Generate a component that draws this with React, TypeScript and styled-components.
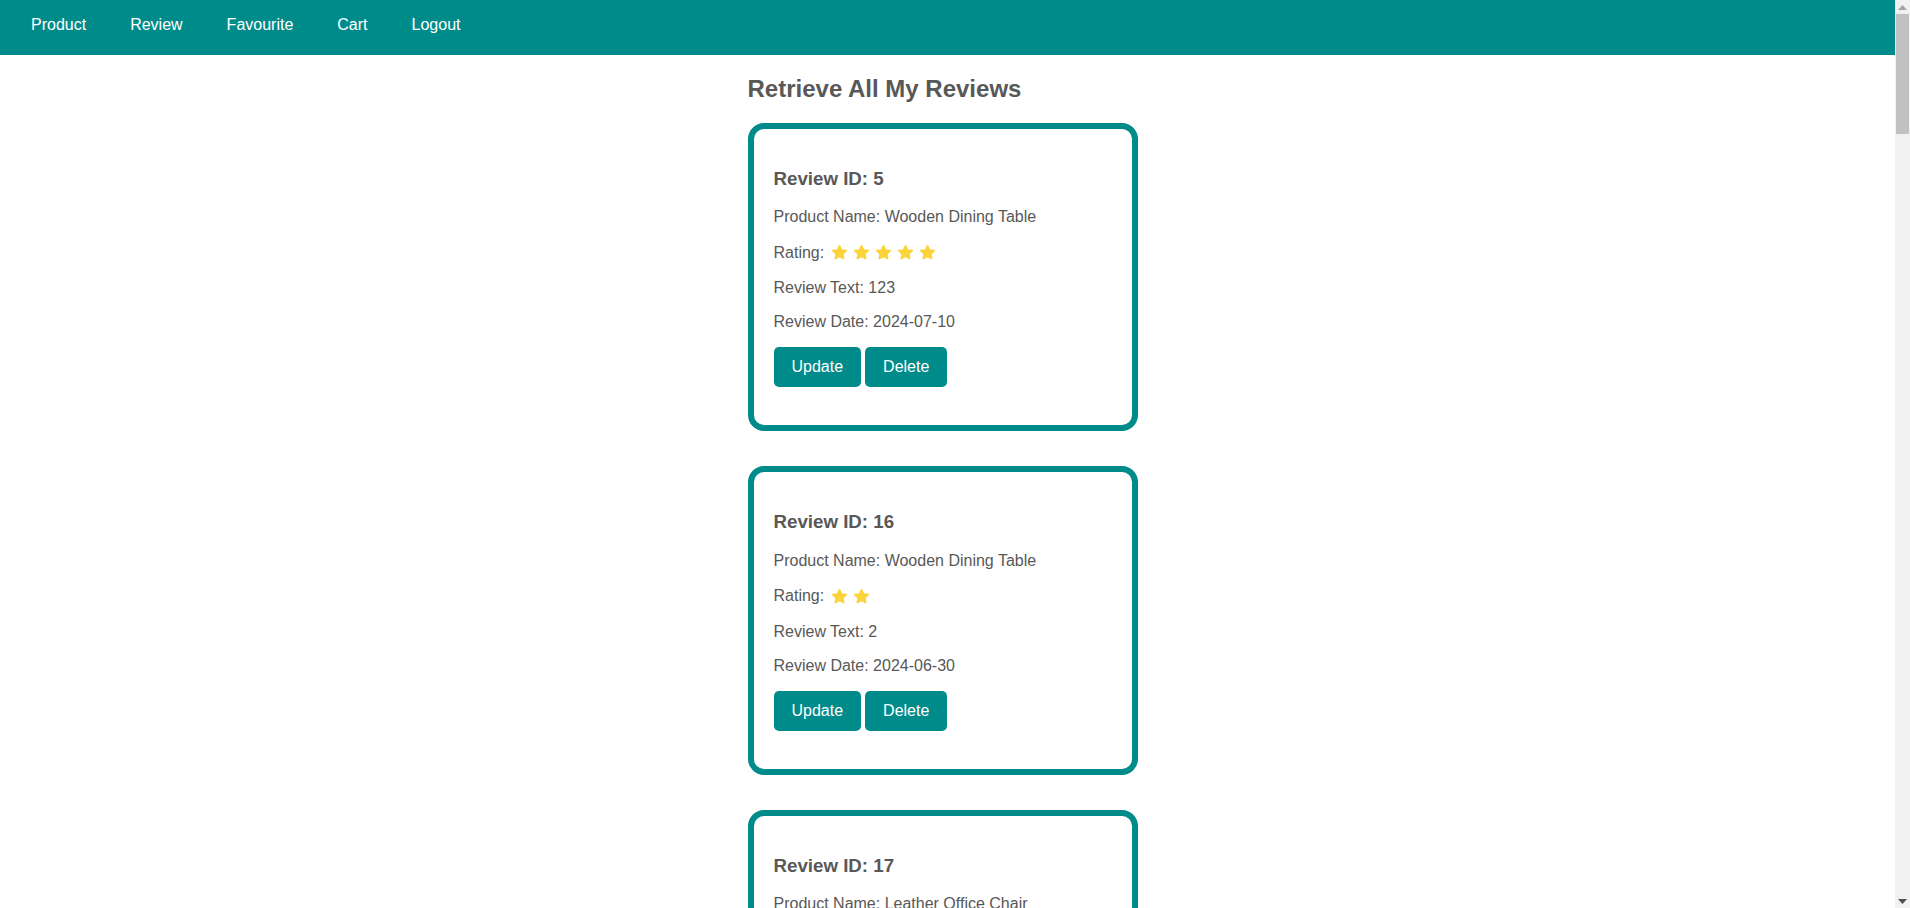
import React from "react";
import styled, { createGlobalStyle } from "styled-components";

const GlobalStyle = createGlobalStyle`
  html, body {
    margin: 0;
    padding: 0;
    background: #ffffff;
    font-family: "Liberation Sans", Arial, sans-serif;
    color: #585858;
  }
`;

const Page = styled.div`
  margin-right: 15px;
`;

const NavBar = styled.nav`
  display: flex;
  align-items: flex-start;
  height: 55px;
  padding: 0 9px;
  background: #008b8b;
  box-sizing: border-box;
`;

const NavLink = styled.a`
  display: block;
  padding: 16px 22px 0;
  color: #ffffff;
  font-size: 16px;
  line-height: 18px;
  text-decoration: none;
  cursor: pointer;
`;

const Main = styled.main`
  width: 400px;
  margin: 0 auto;
  padding-bottom: 40px;
`;

const Title = styled.h2`
  margin: 20px 0;
  font-size: 24px;
  font-weight: bold;
  color: #585858;
`;

const Card = styled.section`
  width: 390px;
  box-sizing: border-box;
  border: 6px solid #008b8b;
  border-radius: 16px;
  padding: 20px;
  margin-bottom: 35px;
`;

const CardTitle = styled.h3`
  margin: 18.72px 0;
  font-size: 18.72px;
  font-weight: bold;
  color: #585858;
`;

const Field = styled.p`
  margin: 16px 0;
  font-size: 16px;
  color: #585858;
  display: flex;
  align-items: center;
`;

const Stars = styled.span`
  display: inline-flex;
  gap: 5px;
  margin-left: 7px;
  height: 21px;
  align-items: center;
`;

const Actions = styled.div`
  display: flex;
  gap: 4px;
  margin-bottom: 18px;
`;

const Button = styled.button`
  height: 40px;
  padding: 0 18px;
  border: none;
  border-radius: 5px;
  background: #008b8b;
  color: #ffffff;
  font-family: "Liberation Sans", Arial, sans-serif;
  font-size: 16px;
  cursor: pointer;
`;

const ScrollTrack = styled.div`
  position: fixed;
  top: 0;
  right: 0;
  width: 15px;
  height: 100vh;
  background: #f1f1f1;
  display: flex;
  flex-direction: column;
  align-items: center;
`;

const ScrollArrow = styled.div<{ $down?: boolean }>`
  height: 14px;
  width: 15px;
  display: flex;
  align-items: center;
  justify-content: center;
  order: ${(p) => (p.$down ? 3 : 0)};
  margin-top: ${(p) => (p.$down ? "auto" : "0")};
`;

const ScrollThumb = styled.div`
  order: 1;
  width: 13px;
  height: 120px;
  background: #c1c1c1;
`;

const Star = () => (
  <svg width="17" height="17" viewBox="0 0 24 24" aria-hidden="true">
    <path
      d="M12 2.6l2.9 5.9 6.5.9-4.7 4.6 1.1 6.5L12 17.4l-5.8 3.1 1.1-6.5-4.7-4.6 6.5-.9z"
      fill="#fdd33b"
      stroke="#fdd33b"
      strokeWidth="2.4"
      strokeLinejoin="round"
    />
  </svg>
);

type Review = {
  id: number;
  product: string;
  rating: number;
  text: string;
  date: string;
};

const reviews: Review[] = [
  { id: 5, product: "Wooden Dining Table", rating: 5, text: "123", date: "2024-07-10" },
  { id: 16, product: "Wooden Dining Table", rating: 2, text: "2", date: "2024-06-30" },
  { id: 17, product: "Leather Office Chair", rating: 4, text: "good", date: "2024-06-30" },
];

export default function App() {
  return (
    <>
      <GlobalStyle />
      <Page>
        <NavBar>
          <NavLink>Product</NavLink>
          <NavLink>Review</NavLink>
          <NavLink>Favourite</NavLink>
          <NavLink>Cart</NavLink>
          <NavLink>Logout</NavLink>
        </NavBar>
        <Main>
          <Title>Retrieve All My Reviews</Title>
          {reviews.map((r) => (
            <Card key={r.id}>
              <CardTitle>Review ID: {r.id}</CardTitle>
              <Field>Product Name: {r.product}</Field>
              <Field>
                Rating:
                <Stars>
                  {Array.from({ length: r.rating }).map((_, i) => (
                    <Star key={i} />
                  ))}
                </Stars>
              </Field>
              <Field>Review Text: {r.text}</Field>
              <Field>Review Date: {r.date}</Field>
              <Actions>
                <Button>Update</Button>
                <Button>Delete</Button>
              </Actions>
            </Card>
          ))}
        </Main>
      </Page>
      <ScrollTrack aria-hidden="true">
        <ScrollArrow>
          <svg width="9" height="5" viewBox="0 0 9 5">
            <path d="M0 5L4.5 0L9 5z" fill="#a3a3a3" />
          </svg>
        </ScrollArrow>
        <ScrollThumb />
        <ScrollArrow $down>
          <svg width="9" height="5" viewBox="0 0 9 5">
            <path d="M0 0L4.5 5L9 0z" fill="#505050" />
          </svg>
        </ScrollArrow>
      </ScrollTrack>
    </>
  );
}
